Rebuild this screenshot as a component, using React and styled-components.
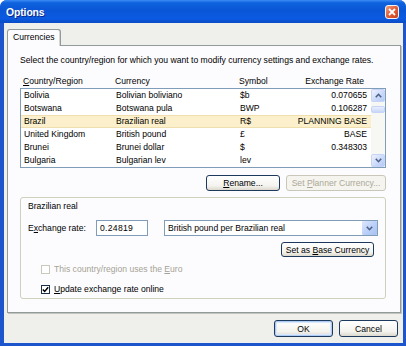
import React from "react";
import styled, { createGlobalStyle } from "styled-components";

const GlobalStyle = createGlobalStyle`
  html, body {
    margin: 0;
    padding: 0;
    background: #ffffff;
  }
  body {
    font-family: "Liberation Sans", Arial, sans-serif;
    font-size: 8.6px;
    color: #000;
  }
`;

const Window = styled.div`
  width: 406px;
  height: 346px;
  display: flex;
  flex-direction: column;
  background: #1c55cc;
  border-radius: 7px 7px 0 0;
  overflow: hidden;
`;

const TitleBar = styled.div`
  height: 23px;
  flex: none;
  display: flex;
  align-items: center;
  justify-content: space-between;
  padding: 0 7px 0 6px;
  background: linear-gradient(
    180deg,
    #3d8df5 0%,
    #0f62de 12%,
    #0a56d6 45%,
    #0b5ae2 80%,
    #0a4cc4 100%
  );
`;

const Title = styled.span`
  color: #fff;
  font-weight: bold;
  font-size: 10.4px;
  letter-spacing: -0.1px;
  text-shadow: 1px 1px 0 #0b2a8c;
  margin-top: 1px;
`;

const CloseButton = styled.div`
  width: 12px;
  height: 12px;
  margin-top: 1px;
  border: 1px solid #f4f4f4;
  border-radius: 3px;
  background: linear-gradient(135deg, #f0a185 0%, #e2623c 45%, #c8431c 100%);
  display: flex;
  align-items: center;
  justify-content: center;
`;

const Body = styled.div`
  flex: 1;
  margin: 0 3px 3px 4px;
  padding: 6px 2px 6px 3px;
  background: #efefeb;
  display: flex;
  flex-direction: column;
`;

const TabStrip = styled.div`
  display: flex;
  height: 16px;
  position: relative;
  z-index: 1;
`;

const Tab = styled.div`
  padding: 0 5px;
  line-height: 15px;
  background: #fcfcfe;
  border: 1px solid #919b9c;
  border-bottom: none;
  border-radius: 3px 3px 0 0;
  box-shadow: inset -1px 0 0 #d6d6d0;
  margin-bottom: -1px;
`;

const TabPanel = styled.div`
  height: 268px;
  box-sizing: border-box;
  display: flex;
  flex-direction: column;
  padding: 9px 14px 0 12px;
  border: 1px solid #919b9c;
  background: #fcfcfe;
  box-shadow: 1px 1px 0 #c4c4bc;
`;

const Intro = styled.div`
  line-height: 11px;
  height: 11px;
  white-space: nowrap;
`;

const Columns = styled.div`
  display: grid;
  grid-template-columns: 92px 124px 1fr auto;
  padding: 0 4px 0 3px;
  white-space: nowrap;
`;

const HeaderRow = styled(Columns)`
  margin-top: 9px;
  margin-right: 18px;
  height: 13px;
  line-height: 12px;
`;

const ListBox = styled.div`
  height: 80px;
  box-sizing: border-box;
  display: flex;
  border: 1px solid #7f9db9;
  background: #fff;
`;

const Rows = styled.div`
  flex: 1;
`;

const Row = styled(Columns)`
  height: 13px;
  line-height: 13px;
  background: ${(p) => (p.$selected ? "#fbf0cb" : "transparent")};
  box-shadow: ${(p) =>
    p.$selected ? "inset 0 1px 0 #efdfae, inset 0 -1px 0 #efdfae" : "none"};
`;

const Rate = styled.span`
  text-align: right;
`;

const ScrollBar = styled.div`
  width: 14px;
  display: flex;
  flex-direction: column;
  background: #f7f7f3;
`;

const ScrollButton = styled.div`
  height: 13px;
  box-sizing: border-box;
  border: 1px solid #c6d4f7;
  border-radius: 2px;
  background: linear-gradient(135deg, #eef2fd 0%, #c9d8fa 60%, #b6caf4 100%);
  display: flex;
  align-items: center;
  justify-content: center;
  margin-top: ${(p) => (p.$bottom ? "auto" : "0")};
`;

const Thumb = styled.div`
  height: 7px;
  margin-top: 4px;
  box-sizing: border-box;
  border: 1px solid #c6d4f7;
  border-radius: 2px;
  background: linear-gradient(180deg, #e9effd, #c7d6f8);
`;

const ButtonRow = styled.div`
  display: flex;
  justify-content: flex-end;
  gap: 6px;
  margin-top: 7px;
`;

const Button = styled.div`
  width: ${(p) => p.$width}px;
  height: ${(p) => p.$height || 16}px;
  box-sizing: border-box;
  display: flex;
  align-items: center;
  justify-content: center;
  white-space: nowrap;
  border: 1px solid ${(p) => (p.$disabled ? "#c9c7ba" : "#1d3a5e")};
  border-radius: 3px;
  color: ${(p) => (p.$disabled ? "#aca899" : "#000")};
  background: ${(p) =>
    p.$disabled
      ? "#f5f4ee"
      : "linear-gradient(180deg, #ffffff 0%, #f4f3ee 70%, #dcd8cc 100%)"};
  box-shadow: ${(p) =>
    p.$default ? "inset 0 0 0 1px #aecbf3, inset 0 0 0 2px #dbe8fb" : "none"};
  align-self: ${(p) => (p.$end ? "flex-end" : "auto")};
  margin-right: ${(p) => p.$mr || 0}px;
`;

const Key = styled.span`
  text-decoration: underline;
`;

const GroupBox = styled.div`
  margin-top: 6px;
  height: 102px;
  box-sizing: border-box;
  display: flex;
  flex-direction: column;
  padding: 3px 7px 0 7px;
  border: 1px solid #d0d0bf;
  border-radius: 3px;
`;

const Caption = styled.div`
  line-height: 11px;
  height: 11px;
`;

const RateRow = styled.div`
  display: flex;
  align-items: center;
  margin-top: 8px;
  height: 16px;
`;

const Label = styled.span`
  width: 68px;
  flex: none;
`;

const TextBox = styled.div`
  width: ${(p) => p.$width}px;
  height: 16px;
  box-sizing: border-box;
  border: 1px solid #7f9db9;
  background: #fff;
  display: flex;
  align-items: center;
  padding-left: 3px;
  margin-right: ${(p) => p.$mr || 0}px;
  letter-spacing: ${(p) => (p.$digits ? "0.3px" : "0")};
`;

const ComboText = styled.span`
  flex: 1;
`;

const DropButton = styled.div`
  width: 15px;
  height: 14px;
  border-radius: 1px;
  background: linear-gradient(135deg, #dde7fd 0%, #bacff8 55%, #a9c1f2 100%);
  display: flex;
  align-items: center;
  justify-content: center;
`;

const CheckRow = styled.label`
  display: flex;
  align-items: center;
  gap: 4px;
  height: 10px;
  padding-left: 13px;
  margin-top: ${(p) => p.$mt}px;
  color: ${(p) => (p.$disabled ? "#a5a295" : "#000")};
`;

const Box = styled.span`
  width: 9px;
  height: 9px;
  box-sizing: border-box;
  border: 1px solid ${(p) => (p.$disabled ? "#cac8bb" : "#1c2f48")};
  background: #fff;
  display: flex;
  align-items: center;
  justify-content: center;
`;

const Footer = styled.div`
  display: flex;
  justify-content: flex-end;
  gap: 6px;
  padding: 7px 3px 0 0;
`;

const Chevron = ({ up }) => (
  <svg width="7" height="5" viewBox="0 0 7 5">
    <path
      d={up ? "M0.8 4.2 L3.5 1.3 L6.2 4.2" : "M0.8 0.8 L3.5 3.7 L6.2 0.8"}
      fill="none"
      stroke="#4d6185"
      strokeWidth="1.6"
    />
  </svg>
);

const currencies = [
  ["Bolivia", "Bolivian boliviano", "$b", "0.070655"],
  ["Botswana", "Botswana pula", "BWP", "0.106287"],
  ["Brazil", "Brazilian real", "R$", "PLANNING BASE"],
  ["United Kingdom", "British pound", "£", "BASE"],
  ["Brunei", "Brunei dollar", "$", "0.348303"],
  ["Bulgaria", "Bulgarian lev", "lev", ""],
];

export default function App() {
  return (
    <>
      <GlobalStyle />
      <Window>
        <TitleBar>
          <Title>Options</Title>
          <CloseButton>
            <svg width="8" height="8" viewBox="0 0 8 8">
              <path d="M1 1 L7 7 M7 1 L1 7" stroke="#fff" strokeWidth="1.8" />
            </svg>
          </CloseButton>
        </TitleBar>

        <Body>
          <TabStrip>
            <Tab>Currencies</Tab>
          </TabStrip>

          <TabPanel>
            <Intro>
              Select the country/region for which you want to modify currency
              settings and exchange rates.
            </Intro>

            <HeaderRow>
              <span>
                <Key>C</Key>ountry/Region
              </span>
              <span>Currency</span>
              <span>Symbol</span>
              <Rate>Exchange Rate</Rate>
            </HeaderRow>

            <ListBox>
              <Rows>
                {currencies.map(([country, name, symbol, rate]) => (
                  <Row key={country} $selected={country === "Brazil"}>
                    <span>{country}</span>
                    <span>{name}</span>
                    <span>{symbol}</span>
                    <Rate>{rate}</Rate>
                  </Row>
                ))}
              </Rows>
              <ScrollBar>
                <ScrollButton>
                  <Chevron up />
                </ScrollButton>
                <Thumb />
                <ScrollButton $bottom>
                  <Chevron />
                </ScrollButton>
              </ScrollBar>
            </ListBox>

            <ButtonRow>
              <Button $width={74}>
                <Key>R</Key>ename...
              </Button>
              <Button $width={100} $disabled>
                Set&nbsp;<Key>P</Key>lanner Currency...
              </Button>
            </ButtonRow>

            <GroupBox>
              <Caption>Brazilian real</Caption>
              <RateRow>
                <Label>
                  E<Key>x</Key>change rate:
                </Label>
                <TextBox $width={52} $mr={16} $digits>
                  0.24819
                </TextBox>
                <TextBox $width={214}>
                  <ComboText>British pound per Brazilian real</ComboText>
                  <DropButton>
                    <Chevron />
                  </DropButton>
                </TextBox>
              </RateRow>
              <Button $width={93} $height={15} $end $mr={4} style={{ marginTop: 6 }}>
                Set as&nbsp;<Key>B</Key>ase Currency
              </Button>
              <CheckRow $mt={7} $disabled>
                <Box $disabled />
                <span>
                  This country/region uses the <Key>E</Key>uro
                </span>
              </CheckRow>
              <CheckRow $mt={10}>
                <Box>
                  <svg width="7" height="7" viewBox="0 0 7 7">
                    <path
                      d="M0.8 3.4 L2.7 5.4 L6.2 1.2"
                      fill="none"
                      stroke="#000"
                      strokeWidth="1.5"
                    />
                  </svg>
                </Box>
                <span>
                  <Key>U</Key>pdate exchange rate online
                </span>
              </CheckRow>
            </GroupBox>
          </TabPanel>

          <Footer>
            <Button $width={59} $height={17} $default>
              OK
            </Button>
            <Button $width={59} $height={17}>
              Cancel
            </Button>
          </Footer>
        </Body>
      </Window>
    </>
  );
}
